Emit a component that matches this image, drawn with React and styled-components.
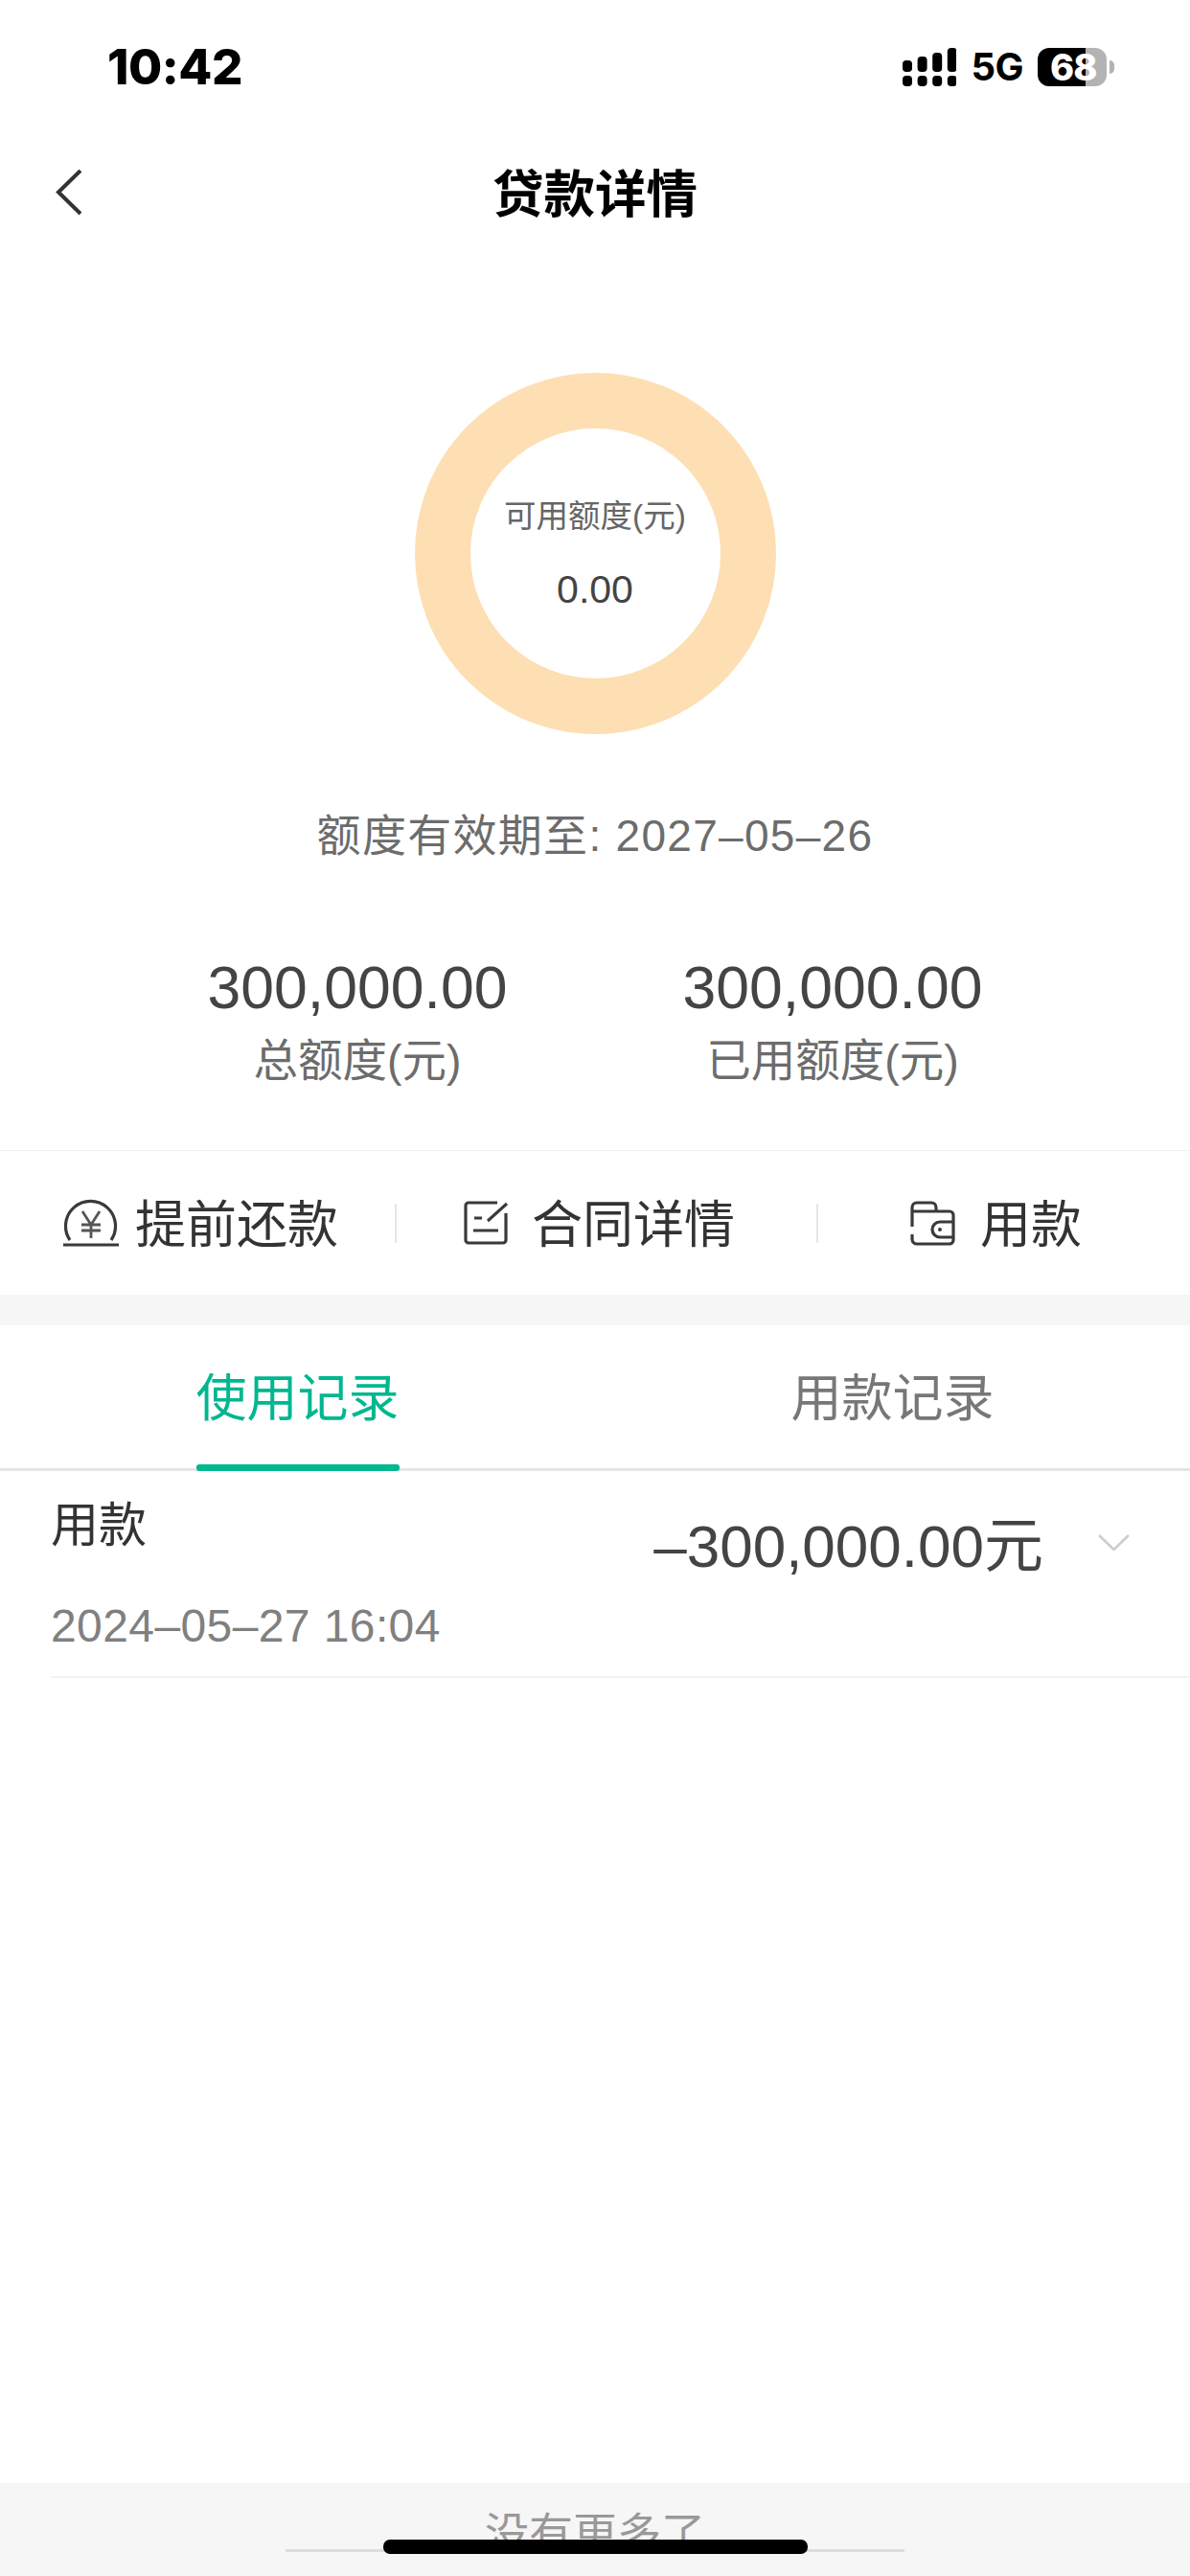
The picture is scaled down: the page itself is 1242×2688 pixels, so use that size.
import React from 'react'
import styled, { createGlobalStyle } from 'styled-components'

const cjk = `"Noto Sans CJK SC", sans-serif`
const mixed = `"Liberation Sans", "Noto Sans CJK SC", sans-serif`

const GlobalStyle = createGlobalStyle`
  html, body {
    margin: 0;
    padding: 0;
    background: #fff;
  }
  * {
    box-sizing: border-box;
  }
`

const Page = styled.div`
  width: 1242px;
  height: 2688px;
  display: flex;
  flex-direction: column;
  position: relative;
  overflow: hidden;
  background: #fff;
  font-family: ${cjk};
`

const StatusBar = styled.div`
  height: 140px;
  padding: 0 79px 0 112px;
  display: flex;
  align-items: center;
  justify-content: space-between;
`

const Clock = styled.div`
  font-family: Inter, sans-serif;
  font-weight: 800;
  font-size: 51px;
  line-height: 60px;
  letter-spacing: -0.5px;
  color: #000;
`

const StatusRight = styled.div`
  display: flex;
  align-items: center;
`

const Network = styled.span`
  font-family: Inter, sans-serif;
  font-weight: 700;
  font-size: 40px;
  line-height: 40px;
  margin: 0 15px 0 15px;
  letter-spacing: -0.5px;
  color: #000;
`

const Battery = styled.div`
  width: 72px;
  height: 40px;
  border-radius: 12px;
  background: linear-gradient(90deg, #000 0, #000 50px, #b3b3b3 50px);
  color: #fff;
  font-family: Inter, sans-serif;
  font-weight: 800;
  font-size: 38px;
  line-height: 40px;
  padding-left: 13px;
  letter-spacing: -1px;
`

const BatteryCap = styled.div`
  width: 5px;
  height: 14px;
  margin-left: 3px;
  border-radius: 0 7px 7px 0;
  background: #b3b3b3;
`

const NavBar = styled.div`
  height: 120px;
  position: relative;
  display: flex;
  align-items: center;
  justify-content: center;
`

const BackButton = styled.div`
  position: absolute;
  left: 58px;
  top: 37px;
  line-height: 0;
`

const Title = styled.div`
  font-size: 53.5px;
  font-weight: 700;
  line-height: 60px;
  margin-top: -3px;
  color: #000;
`

const Donut = styled.div`
  width: 377px;
  height: 377px;
  margin: 129px auto 0;
  border: 58px solid #fddfb3;
  border-radius: 50%;
  display: flex;
  flex-direction: column;
  align-items: center;
`

const DonutLabel = styled.div`
  font-family: ${mixed};
  font-size: 33.5px;
  line-height: 40px;
  margin-top: 72px;
  color: #666;
`

const DonutValue = styled.div`
  font-family: ${mixed};
  font-size: 41px;
  line-height: 50px;
  margin-top: 31px;
  color: #444;
`

const Validity = styled.div`
  margin-top: 76px;
  text-align: center;
  font-family: ${mixed};
  font-size: 46px;
  line-height: 60px;
  letter-spacing: 1.3px;
  color: #6c6c6c;
`

const Stats = styled.div`
  margin-top: 93px;
  display: flex;
  justify-content: center;
`

const Stat = styled.div`
  width: 496px;
  text-align: center;
`

const StatValue = styled.div`
  font-family: ${mixed};
  font-size: 62.5px;
  line-height: 70px;
  color: #444;
`

const StatLabel = styled.div`
  font-family: ${mixed};
  font-size: 46.5px;
  line-height: 60px;
  margin-top: 12px;
  color: #6c6c6c;
`

const Actions = styled.div`
  height: 151px;
  margin-top: 63px;
  border-top: 1px solid #f0f0f0;
  display: flex;
  align-items: center;
`

const Action = styled.div`
  width: ${(p) => p.$width}px;
  padding-left: ${(p) => p.$pad}px;
  display: flex;
  align-items: center;
  gap: ${(p) => p.$gap}px;
  font-size: 53px;
  line-height: 60px;
  color: #333;
`

const ActionText = styled.span`
  margin-top: -5px;
`

const ActionDivider = styled.div`
  width: 2px;
  height: 41px;
  margin-left: -1px;
  margin-right: -1px;
  background: #e6e6e6;
`

const Gap = styled.div`
  height: 32px;
  background: #f6f6f6;
`

const Tabs = styled.div`
  height: 152px;
  display: flex;
  border-bottom: 3px solid #e5e5e5;
`

const Tab = styled.div`
  flex: 1;
  display: flex;
  justify-content: center;
`

const TabLabel = styled.div`
  position: relative;
  width: 212px;
  padding-top: 42px;
  text-align: center;
  font-size: 53px;
  line-height: 60px;
  color: ${(p) => (p.$active ? '#00b78f' : '#777')};

  ${(p) =>
    p.$active &&
    `&::after {
      content: '';
      position: absolute;
      left: 0;
      right: 0;
      bottom: -3px;
      height: 7px;
      border-radius: 3px;
      background: #00b78f;
    }`}
`

const RecordList = styled.div`
  flex: 1;
`

const Record = styled.div`
  height: 216px;
  margin-left: 53px;
  padding-right: 63px;
  border-bottom: 2px solid #f3f3f3;
  display: flex;
  justify-content: space-between;
`

const RecordInfo = styled.div`
  padding-top: 22px;
`

const RecordTitle = styled.div`
  font-size: 50px;
  line-height: 60px;
  color: #333;
`

const RecordDate = styled.div`
  font-family: ${mixed};
  font-size: 48px;
  line-height: 60px;
  letter-spacing: 0.4px;
  margin-top: 50px;
  color: #808080;
`

const RecordRight = styled.div`
  display: flex;
  align-items: flex-start;
  gap: 57px;
  padding-top: 44px;
`

const RecordAmount = styled.div`
  font-family: ${mixed};
  font-size: 62px;
  line-height: 70px;
  color: #444;
`

const Chevron = styled.svg`
  margin-top: 22px;
`

const Footer = styled.div`
  height: 97px;
  background: #f6f6f6;
  padding-top: 69px;
`

const FooterLine = styled.div`
  position: relative;
  width: 646px;
  height: 3px;
  margin: 0 auto;
  background: #ddd;
`

const FooterText = styled.span`
  position: absolute;
  left: 50%;
  top: -50px;
  transform: translateX(-50%);
  padding: 0 4px;
  white-space: nowrap;
  font-size: 46px;
  line-height: 60px;
  color: #999;
`

const HomeIndicator = styled.div`
  position: absolute;
  left: 400px;
  top: 2650px;
  width: 443px;
  height: 15px;
  border-radius: 7px;
  background: #000;
`

function SignalIcon() {
  const tops = [13, 9, 5, 0]
  return (
    <svg width="56" height="40" viewBox="0 0 56 40" fill="#000">
      {tops.map((top, i) => (
        <g key={top}>
          <rect x={i * 15.6} y={top} width="10" height={25 - top} rx="4" />
          <rect x={i * 15.6} y="29" width="10" height="11" rx="4" />
        </g>
      ))}
    </svg>
  )
}

function BackIcon() {
  return (
    <svg width="28" height="48" viewBox="0 0 28 48" fill="none" stroke="#333" strokeWidth="4">
      <path d="M26 1 L3 23.5 L26 46" />
    </svg>
  )
}

function RepayIcon() {
  return (
    <svg width="58" height="50" viewBox="0 0 58 50" fill="none" stroke="#3a3a3a" strokeWidth="3.2">
      <path d="M7 43 A26 26 0 1 1 50 43" />
      <path d="M0 48 H58" />
      <path strokeWidth="2.8" stroke="#555" d="M20 13 L29 27 L38 13 M19 27 H39 M19 33 H39 M29 27 V41" />
    </svg>
  )
}

function ContractIcon() {
  return (
    <svg width="46" height="46" viewBox="0 0 46 46" fill="none" stroke="#3a3a3a" strokeWidth="3.2">
      <path d="M35 2 H5 a3 3 0 0 0 -3 3 V41 a3 3 0 0 0 3 3 H41 a3 3 0 0 0 3 -3 V13" />
      <path d="M45 3 L25 21 M11 18 H19 M10 31 H36" />
    </svg>
  )
}

function WalletIcon() {
  return (
    <svg width="47" height="47" viewBox="0 0 47 47" fill="none" stroke="#3a3a3a" strokeWidth="3.2">
      <path d="M2 27 V7 a5 5 0 0 1 5 -5 H22 a5 5 0 0 1 5 5 V11" />
      <path d="M2 11 H41 a4 4 0 0 1 4 4 V41 a4 4 0 0 1 -4 4 H7 a5 5 0 0 1 -5 -5 V35" />
      <path d="M45 22 H31 a8 8 0 0 0 0 16 H45" />
      <circle cx="31" cy="30" r="2" fill="#3a3a3a" stroke="none" />
    </svg>
  )
}

export default function App() {
  return (
    <Page>
      <GlobalStyle />
      <StatusBar>
        <Clock>10:42</Clock>
        <StatusRight>
          <SignalIcon />
          <Network>5G</Network>
          <Battery>68</Battery>
          <BatteryCap />
        </StatusRight>
      </StatusBar>
      <NavBar>
        <BackButton>
          <BackIcon />
        </BackButton>
        <Title>贷款详情</Title>
      </NavBar>
      <Donut>
        <DonutLabel>可用额度(元)</DonutLabel>
        <DonutValue>0.00</DonutValue>
      </Donut>
      <Validity>额度有效期至: 2027–05–26</Validity>
      <Stats>
        <Stat>
          <StatValue>300,000.00</StatValue>
          <StatLabel>总额度(元)</StatLabel>
        </Stat>
        <Stat>
          <StatValue>300,000.00</StatValue>
          <StatLabel>已用额度(元)</StatLabel>
        </Stat>
      </Stats>
      <Actions>
        <Action $width={413} $pad={66} $gap={17}>
          <RepayIcon />
          <ActionText>提前还款</ActionText>
        </Action>
        <ActionDivider />
        <Action $width={440} $pad={71} $gap={25}>
          <ContractIcon />
          <ActionText>合同详情</ActionText>
        </Action>
        <ActionDivider />
        <Action $width={389} $pad={97} $gap={26}>
          <WalletIcon />
          <ActionText>用款</ActionText>
        </Action>
      </Actions>
      <Gap />
      <Tabs>
        <Tab>
          <TabLabel $active>使用记录</TabLabel>
        </Tab>
        <Tab>
          <TabLabel>用款记录</TabLabel>
        </Tab>
      </Tabs>
      <RecordList>
        <Record>
          <RecordInfo>
            <RecordTitle>用款</RecordTitle>
            <RecordDate>2024–05–27 16:04</RecordDate>
          </RecordInfo>
          <RecordRight>
            <RecordAmount>–300,000.00元</RecordAmount>
            <Chevron width="33" height="17" viewBox="0 0 33 17" fill="none" stroke="#ccc" strokeWidth="2.5">
              <path d="M1 1 L16.5 16 L32 1" />
            </Chevron>
          </RecordRight>
        </Record>
      </RecordList>
      <Footer>
        <FooterLine>
          <FooterText>没有更多了</FooterText>
        </FooterLine>
      </Footer>
      <HomeIndicator />
    </Page>
  )
}
